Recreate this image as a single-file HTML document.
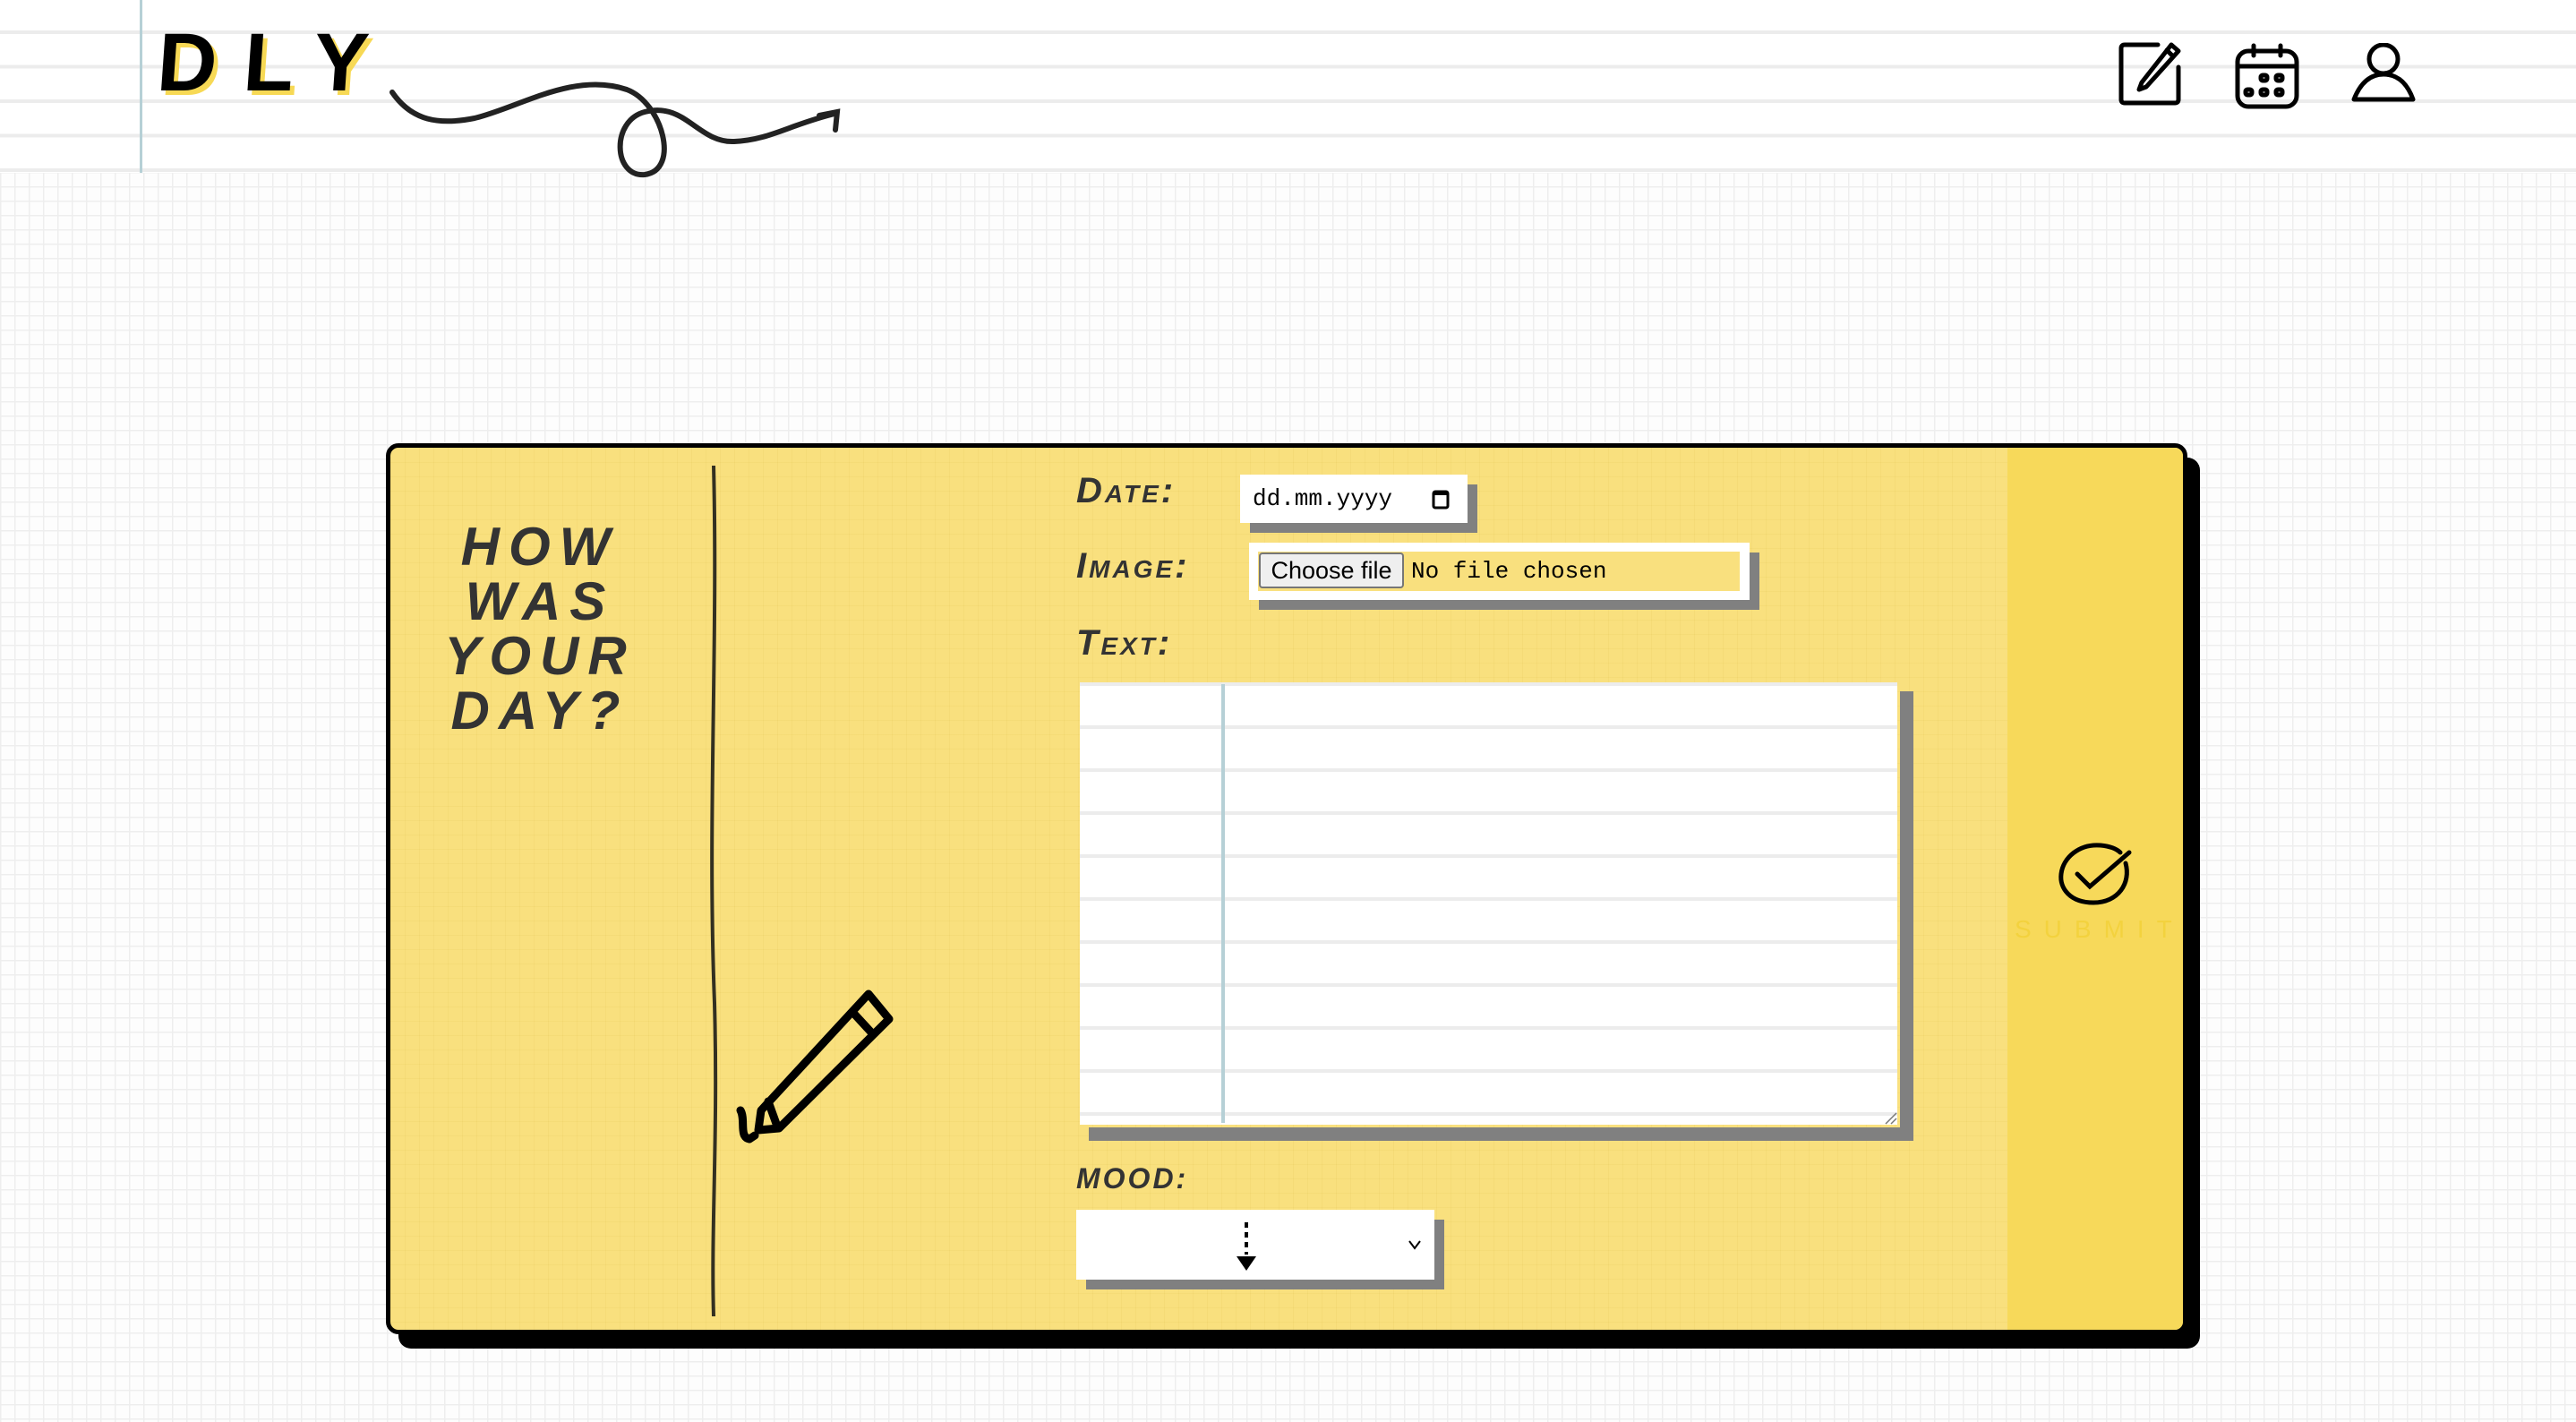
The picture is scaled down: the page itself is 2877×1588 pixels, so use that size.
<!DOCTYPE html>
<html><head><meta charset="utf-8"><style>
html,body{margin:0;padding:0}
body{width:2877px;height:1588px;position:relative;overflow:hidden;font-family:"Liberation Sans",sans-serif;
background-color:#fdfdfd;
background-image:linear-gradient(#eeeeee 1.5px,transparent 1.5px),linear-gradient(90deg,#eeeeee 1.5px,transparent 1.5px);
background-size:16px 16px;}
.header{position:absolute;left:0;top:0;width:2877px;height:193px;background:#fff;
background-image:repeating-linear-gradient(to bottom,transparent 0,transparent 34px,#ececec 34px,#ececec 38px,transparent 38px,transparent 38.5px);}
.margin{position:absolute;left:156px;top:0;width:3px;height:193px;background:#b6d0d6}
.logo{position:absolute;left:176px;top:18px;font-size:92px;font-weight:900;letter-spacing:30px;color:#000;
text-shadow:5px 5px 0 #f7d955;font-family:"Liberation Sans",sans-serif;transform:skewX(-4deg)}
.abs{position:absolute}
.card{position:absolute;left:431px;top:495px;width:2002px;height:985px;border:5px solid #000;border-radius:14px;
background-color:#f9e07e;
background-image:linear-gradient(rgba(220,190,80,.15) 1px,transparent 1px),linear-gradient(90deg,rgba(220,190,80,.15) 1px,transparent 1px);
background-size:16px 16px;box-shadow:14px 16px 0 #000;overflow:hidden}
.submit{position:absolute;left:1806px;top:0;width:200px;height:100%;background:#f7d95a}
.hw{position:absolute;left:478px;top:580px;width:250px;text-align:center;font-size:60px;line-height:61px;font-weight:900;font-style:italic;color:#333;letter-spacing:10px}
.lbl{position:absolute;font-weight:900;font-style:italic;color:#333;font-size:40px;font-variant:small-caps;letter-spacing:3px}
.box{position:absolute;background:#fff;box-shadow:11px 11px 0 #808080}
.mono{font-family:"Liberation Mono",monospace}
</style></head><body>
<div class="header"><div class="margin"></div></div>
<div class="logo">DLY</div>
<svg class="abs" style="left:420px;top:80px" width="540" height="130" viewBox="0 0 540 130">
<path d="M18 23 C40 55 70 60 110 52 C160 40 220 0 280 20 C320 35 340 110 300 115 C265 118 262 55 300 45 C345 33 360 80 400 78 C440 76 460 60 512 47 M495 49 L515 45 L513 65" fill="none" stroke="#222" stroke-width="6" stroke-linecap="round"/>
</svg>
<svg class="abs" style="left:2365px;top:45px" width="75" height="75" viewBox="0 0 75 75" fill="none" stroke="#000" stroke-width="5" stroke-linecap="round" stroke-linejoin="round">
<path d="M45 5 H8 Q4 5 4 9 V66 Q4 70 8 70 H64 Q68 70 68 66 V30"/>
<path d="M60 5 L68 12 L32 52 L24 55 L27 47 Z M55 11 L62 18"/>
</svg>
<svg class="abs" style="left:2495px;top:48px" width="75" height="75" viewBox="0 0 75 75" fill="none" stroke="#000" stroke-width="5" stroke-linecap="round">
<rect x="4" y="9" width="66" height="62" rx="12"/><path d="M4 26 H70 M22 3 V14 M52 3 V14"/>
<rect x="30" y="36" width="7" height="6" rx="2"/><rect x="47" y="36" width="7" height="6" rx="2"/>
<rect x="13" y="52" width="7" height="6" rx="2"/><rect x="30" y="52" width="7" height="6" rx="2"/><rect x="47" y="52" width="7" height="6" rx="2"/>
</svg>
<svg class="abs" style="left:2625px;top:48px" width="75" height="70" viewBox="0 0 75 70" fill="none" stroke="#000" stroke-width="5" stroke-linejoin="round">
<circle cx="37" cy="18" r="16"/><path d="M4 63 Q15 35 37 35 Q60 35 70 63 Z"/>
</svg>
<div class="card"><div class="submit"></div></div>
<div class="hw">HOW WAS YOUR DAY?</div>
<svg class="abs" style="left:780px;top:520px" width="40" height="950" viewBox="0 0 40 950">
<path d="M17 0 C22 200 10 400 18 600 C22 750 14 850 17 950" fill="none" stroke="#111" stroke-width="4" opacity=".85"/>
</svg>
<svg class="abs" style="left:805px;top:1100px" width="200" height="180" viewBox="0 0 200 180" fill="none" stroke="#000" stroke-width="9" stroke-linejoin="round" stroke-linecap="round">
<path d="M165 10 L188 38 L65 160 L42 162 L45 140 Z M147 30 L170 55 M53 130 L62 155"/>
<path d="M22 140 C28 150 20 170 32 172 L38 168"/>
</svg>
<div class="lbl" style="left:1202px;top:526px">Date:</div>
<div class="lbl" style="left:1202px;top:610px">Image:</div>
<div class="lbl" style="left:1202px;top:696px">Text:</div>
<div class="lbl" style="left:1202px;top:1298px;font-size:32px">MOOD:</div>
<div class="box mono" style="left:1385px;top:530px;width:254px;height:54px;font-size:26px;line-height:54px;padding-left:14px;box-sizing:border-box">dd.mm.yyyy
<svg class="abs" style="left:214px;top:15px" width="20" height="24" viewBox="0 0 20 24"><rect x="2" y="4" width="16" height="18" rx="2" fill="none" stroke="#000" stroke-width="3"/><path d="M2 6 H18" stroke="#000" stroke-width="4"/></svg></div>
<div class="box" style="left:1395px;top:606px;width:559px;height:64px">
<div class="abs" style="left:10px;top:10px;width:538px;height:44px;background:#f9e07e"></div>
<div class="abs" style="left:11px;top:11px;width:162px;height:40px;background:#efefef;border:2px solid #767676;border-radius:4px;box-sizing:border-box;font-size:27px;line-height:36px;text-align:center">Choose file</div>
<div class="abs mono" style="left:181px;top:12px;font-size:26px;line-height:40px">No file chosen</div>
</div>
<div class="box" style="left:1202px;top:758px;width:921px;height:502px;box-shadow:14px 14px 0 #808080;
background-image:repeating-linear-gradient(to bottom,transparent 0,transparent 4px,#ececec 4px,#ececec 8px,transparent 8px,transparent 48px);background-clip:content-box;padding:4px;box-sizing:border-box">
<div class="abs" style="left:162px;top:6px;width:4px;height:490px;background:#b6d0d6"></div>
<svg class="abs" style="right:4px;bottom:4px" width="16" height="16"><path d="M15 3 L3 15 M15 9 L9 15" stroke="#777" stroke-width="1.5"/></svg>
</div>
<div class="box" style="left:1202px;top:1351px;width:400px;height:78px">
<svg class="abs" style="left:175px;top:12px" width="30" height="58" viewBox="0 0 30 58"><path d="M15 2 V38" stroke="#000" stroke-width="4" stroke-dasharray="6 5"/><path d="M4 40 H26 L15 56 Z" fill="#000"/></svg>
<svg class="abs" style="left:370px;top:33px" width="16" height="12" viewBox="0 0 16 12"><path d="M2 2 L8 10 L14 2" fill="none" stroke="#000" stroke-width="2"/></svg>
</div>
<svg class="abs" style="left:2296px;top:936px" width="90" height="80" viewBox="0 0 90 80" fill="none" stroke="#000" stroke-width="5" stroke-linecap="round">
<path d="M78 28 C84 50 70 72 42 72 C16 72 4 56 6 40 C8 22 26 6 50 8 C60 9 68 12 72 16"/><path d="M24 40 L38 54 L82 16"/>
</svg>
<div class="abs" style="left:2250px;top:1022px;width:180px;text-align:center;font-size:28px;letter-spacing:14px;color:#f3d23e">SUBMIT</div>
</body></html>
